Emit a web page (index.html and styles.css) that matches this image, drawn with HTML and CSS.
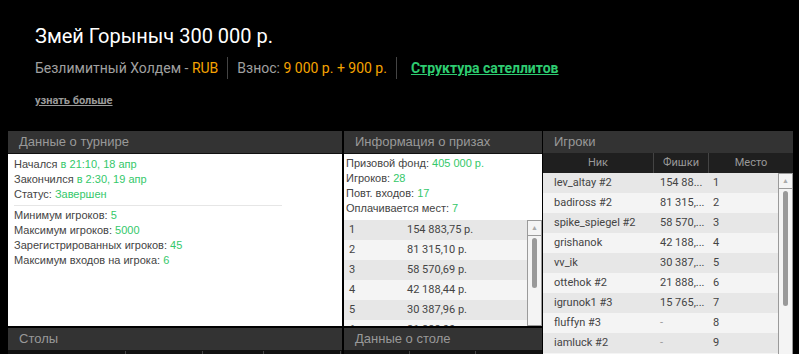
FILE: index.html
```html
<!DOCTYPE html>
<html lang="ru">
<head>
    <meta charset="UTF-8">
    <meta name="viewport" content="width=device-width, initial-scale=1.0">
    <title>Змей Горыныч 300 000 р.</title>
    <link rel="stylesheet" href="styles.css">
</head>
<body>
    <div class="top">
        <h1 class="title">Змей Горыныч 300 000 р.</h1>
        <div class="meta">
            <span class="meta-item">Безлимитный Холдем - <span class="orange">RUB</span></span>
            <span class="meta-item">Взнос: <span class="orange">9 000 р. + 900 р.</span></span>
            <a class="meta-item sat-link" href="#">Структура сателлитов</a>
        </div>
        <a class="more-link" href="#">узнать больше</a>
    </div>

    <div class="panels">
        <div class="panel info-panel">
            <div class="panel-head">Данные о турнире</div>
            <div class="panel-body info-body">
                <div class="info-line">Начался <span class="green">в 21:10, 18 апр</span></div>
                <div class="info-line">Закончился <span class="green">в 2:30, 19 апр</span></div>
                <div class="info-line">Статус: <span class="green">Завершен</span></div>
                <div class="sep"></div>
                <div class="info-line">Минимум игроков: <span class="green">5</span></div>
                <div class="info-line">Максимум игроков: <span class="green">5000</span></div>
                <div class="info-line">Зарегистрированных игроков: <span class="green">45</span></div>
                <div class="info-line">Максимум входов на игрока: <span class="green">6</span></div>
            </div>
        </div>

        <div class="panel prize-panel">
            <div class="panel-head">Информация о призах</div>
            <div class="panel-body prize-body">
                <div class="prize-info">
                    <div class="info-line">Призовой фонд: <span class="green">405 000 р.</span></div>
                    <div class="info-line">Игроков: <span class="green">28</span></div>
                    <div class="info-line">Повт. входов: <span class="green">17</span></div>
                    <div class="info-line">Оплачивается мест: <span class="green">7</span></div>
                </div>
                <div class="scroll-table">
                    <div class="rows">
                        <div class="row prize-row"><span>1</span><span>154 883,75 р.</span></div>
                        <div class="row prize-row"><span>2</span><span>81 315,10 р.</span></div>
                        <div class="row prize-row"><span>3</span><span>58 570,69 р.</span></div>
                        <div class="row prize-row"><span>4</span><span>42 188,44 р.</span></div>
                        <div class="row prize-row"><span>5</span><span>30 387,96 р.</span></div>
                        <div class="row prize-row"><span>6</span><span>21 888,00 р.</span></div>
                    </div>
                    <div class="scrollbar">
                        <div class="arrow up">&#9650;</div>
                        <div class="track"><div class="thumb prize-thumb"></div></div>
                        <div class="arrow down">&#9660;</div>
                    </div>
                </div>
            </div>
        </div>

        <div class="panel players-panel">
            <div class="panel-head">Игроки</div>
            <div class="cols">
                <span class="col-nick">Ник</span>
                <span class="col-chips">Фишки</span>
                <span class="col-place">Место</span>
            </div>
            <div class="scroll-table players-table">
                <div class="rows">
                    <div class="row player-row"><span>lev_altay #2</span><span>154 88...</span><span>1</span></div>
                    <div class="row player-row"><span>badiross #2</span><span>81 315,...</span><span>2</span></div>
                    <div class="row player-row"><span>spike_spiegel #2</span><span>58 570,...</span><span>3</span></div>
                    <div class="row player-row"><span>grishanok</span><span>42 188,...</span><span>4</span></div>
                    <div class="row player-row"><span>vv_ik</span><span>30 387,...</span><span>5</span></div>
                    <div class="row player-row"><span>ottehok #2</span><span>21 888,...</span><span>6</span></div>
                    <div class="row player-row"><span>igrunok1 #3</span><span>15 765,...</span><span>7</span></div>
                    <div class="row player-row"><span>fluffyn #3</span><span class="dash">-</span><span>8</span></div>
                    <div class="row player-row"><span>iamluck #2</span><span class="dash">-</span><span>9</span></div>
                </div>
                <div class="scrollbar">
                    <div class="arrow up">&#9650;</div>
                    <div class="track"><div class="thumb players-thumb"></div></div>
                </div>
            </div>
        </div>

        <div class="panel tables-panel">
            <div class="panel-head">Столы</div>
            <div class="grid-head">
                <span></span><span></span><span></span><span></span>
            </div>
        </div>

        <div class="panel table-panel">
            <div class="panel-head">Данные о столе</div>
            <div class="grid-head table-grid">
                <span></span><span></span>
            </div>
        </div>
    </div>
</body>
</html>
```

FILE: styles.css
```css
body {
	margin: 0;
	background: #000;
	font-family: Roboto, "Liberation Sans", sans-serif;
	overflow: hidden;
	height: 354px;
}

a {
	text-decoration: underline;
}

.top {
	padding: 24px 0 0 35px;
	height: 130px;
	box-sizing: border-box;
}

.title {
	margin: 0;
	font-size: 20px;
	font-weight: 400;
	color: #fff;
	line-height: 24px;
}

.meta {
	display: flex;
	align-items: center;
	margin-top: 9px;
	font-size: 14px;
	color: #a0a0a0;
	line-height: 22px;
}

.meta-item {
	padding: 0 9px;
	border-left: 1px solid #444;
}

.meta-item:first-child {
	padding-left: 0;
	border-left: none;
}

.meta-item.sat-link {
	padding-left: 14px;
}

.orange {
	color: #f5a300;
}

.sat-link {
	color: #2ecc71;
	font-weight: 700;
}

.more-link {
	display: inline-block;
	margin-top: 15px;
	font-size: 11px;
	font-weight: 700;
	color: #9a9a9a;
}

.panels {
	display: grid;
	grid-template-columns: 334px 198px 249px;
	grid-template-rows: 195px 26px;
	column-gap: 2px;
	row-gap: 2px;
	margin: 1px 6px 0 8px;
	height: 223px;
	overflow: hidden;
}

.panel {
	display: flex;
	flex-direction: column;
	overflow: hidden;
	background: #fff;
}

.players-panel {
	grid-column: 3;
	grid-row: 1 / 3;
	margin-left: -1px;
	background: #000;
}

.panel-head {
	height: 22px;
	line-height: 22px;
	background: #333;
	color: #999;
	font-family: "Liberation Sans", Arial, sans-serif;
	font-size: 13px;
	padding-left: 11px;
	border-bottom: 1px solid #111;
	flex: none;
}

.players-panel .panel-head {
	border-bottom: none;
}

.panel-body {
	flex: 1;
	font-family: "Liberation Sans", Arial, sans-serif;
	font-size: 11px;
	color: #444;
}

.info-body {
	padding: 3px 6px;
}

.info-line {
	line-height: 15px;
	white-space: nowrap;
}

.green {
	color: #34c86a;
}

.sep {
	width: 268px;
	border-top: 1px solid #e6e6e6;
	margin: 3px 0 2px;
}

.prize-body {
	display: flex;
	flex-direction: column;
}

.prize-info {
	padding: 2px 2px 4px;
}

.scroll-table {
	display: flex;
	flex: 1;
	overflow: hidden;
	font-family: Roboto, sans-serif;
	font-size: 11px;
	color: #444;
}

.rows {
	flex: 1;
	overflow: hidden;
}

.row {
	display: flex;
	height: 20px;
	line-height: 20px;
	background: #f4f4f4;
}

.row:nth-child(odd) {
	background: #e7e7e7;
}

.prize-row span:first-child {
	width: 63px;
	padding-left: 5px;
	box-sizing: border-box;
}

.scrollbar {
	width: 15px;
	display: flex;
	flex-direction: column;
	border: 1px solid #9a9a9a;
	border-bottom: none;
	background: #f4f4f4;
	box-sizing: border-box;
}

.arrow {
	height: 14px;
	line-height: 14px;
	text-align: center;
	font-size: 7px;
	color: #aaa;
	flex: none;
}

.arrow.up {
	border-bottom: 1px solid #9a9a9a;
}

.arrow.down {
	border-top: 1px solid #9a9a9a;
}

.track {
	flex: 1;
	padding: 2px 3px;
}

.thumb {
	width: 5px;
	margin: 0 auto;
	background: #999;
	border-radius: 3px;
}

.prize-thumb {
	height: 50px;
}

.players-thumb {
	height: 115px;
}

.cols {
	display: flex;
	height: 20px;
	line-height: 20px;
	background: #1f1f1f;
	color: #999;
	font-size: 11px;
	text-align: center;
	flex: none;
}

.col-nick {
	width: 110px;
	border-right: 1px solid #444;
}

.col-chips {
	width: 54px;
	border-right: 1px solid #444;
}

.col-place {
	flex: 1;
}

.players-table {
	background: #f4f4f4;
}

.player-row span:nth-child(1) {
	width: 111px;
	padding-left: 11px;
	box-sizing: border-box;
	white-space: nowrap;
}

.player-row span:nth-child(2) {
	width: 59px;
	padding-left: 6px;
	box-sizing: border-box;
	white-space: nowrap;
}

.dash {
	color: #999;
}

.tables-panel,
.table-panel {
	background: #000;
}

.grid-head {
	display: grid;
	grid-template-columns: 118px 77px 61px 77px;
	height: 3px;
	background: #111;
	flex: none;
}

.grid-head span {
	border-right: 1px solid #444;
}

.table-grid {
	grid-template-columns: 66px 66px;
}
```
